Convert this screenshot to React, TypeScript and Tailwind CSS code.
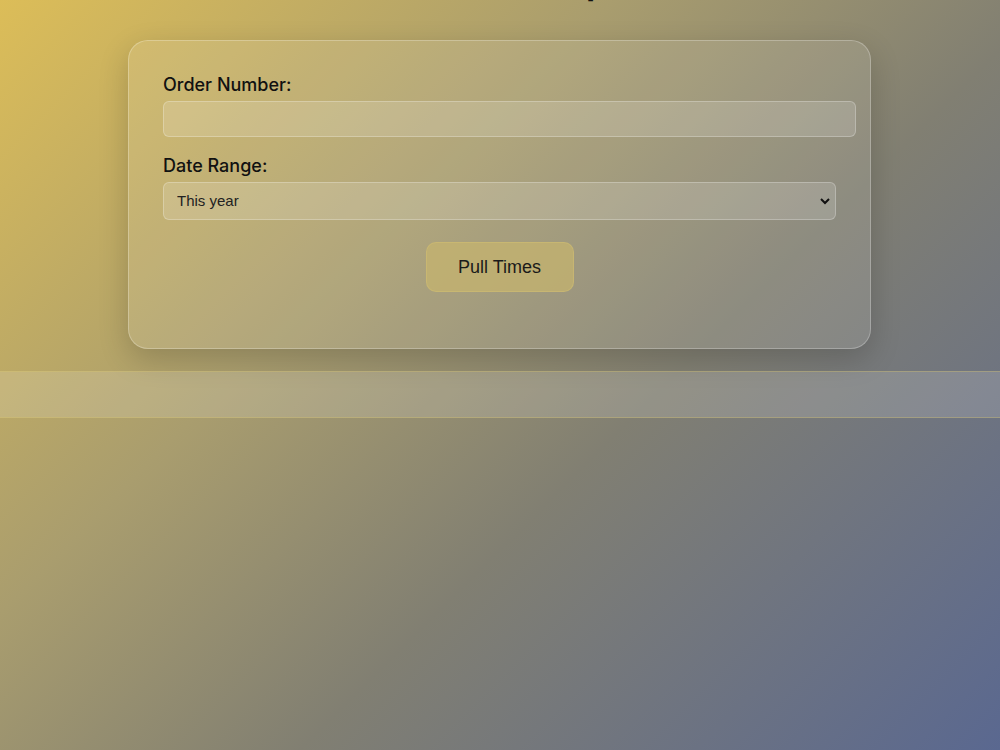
import React, { useState } from 'react';

export default function App() {
  const [orderNumber, setOrderNumber] = useState('');
  const [range, setRange] = useState('year');

  return (
    <div className="min-h-[750px] w-full overflow-hidden bg-[linear-gradient(135deg,#dcbd58_0%,#a99d6e_35%,#817f72_60%,#5a6890_100%)] font-['Inter',sans-serif] text-[#111]">
      <h1 className="mt-[-36px] mb-[36px] h-[40px] text-center text-[32px] font-bold leading-[40px]">Order Lookup</h1>

      <div className="ml-[128px] w-[743px] rounded-[20px] border border-white/25 bg-white/10 px-[34px] pt-[32px] pb-[56px] shadow-[0_10px_30px_rgba(0,0,0,0.18)]">
        <label className="block text-[18px] font-medium leading-[24px]">Order Number:</label>
        <input
          value={orderNumber}
          onChange={(e) => setOrderNumber(e.target.value)}
          className="mt-[4px] box-content block h-[34px] w-full rounded-[6px] border border-white/25 bg-white/15 px-[9px] font-['Liberation_Sans',sans-serif] text-[15px] outline-none"
        />

        <label className="mt-[17px] block text-[18px] font-medium leading-[24px]">Date Range:</label>
        <div className="relative mt-[4px]">
          <select
            value={range}
            onChange={(e) => setRange(e.target.value)}
            className="block h-[38px] w-full appearance-none rounded-[6px] border border-white/25 bg-white/15 pl-[13px] font-['Liberation_Sans',sans-serif] text-[15px] text-[#222] outline-none"
          >
            <option value="week">This week</option>
            <option value="month">This month</option>
            <option value="year">This year</option>
          </select>
          <svg className="pointer-events-none absolute right-[5px] top-[13px]" width="12" height="12" viewBox="0 0 12 12">
            <path d="M2 4l4 4 4-4" fill="none" stroke="#111" strokeWidth="2" />
          </svg>
        </div>

        <div className="mt-[22px] flex justify-center">
          <button className="h-[50px] w-[148px] rounded-[10px] border border-[#d8c470]/40 bg-[#c8b56e]/70 font-['Liberation_Sans',sans-serif] text-[18px] text-[#1a1a1a]">
            Pull Times
          </button>
        </div>
      </div>

      <footer className="mt-[22px] h-[47px] w-full border-y border-[#d6c266]/35 bg-white/15" />
    </div>
  );
}
